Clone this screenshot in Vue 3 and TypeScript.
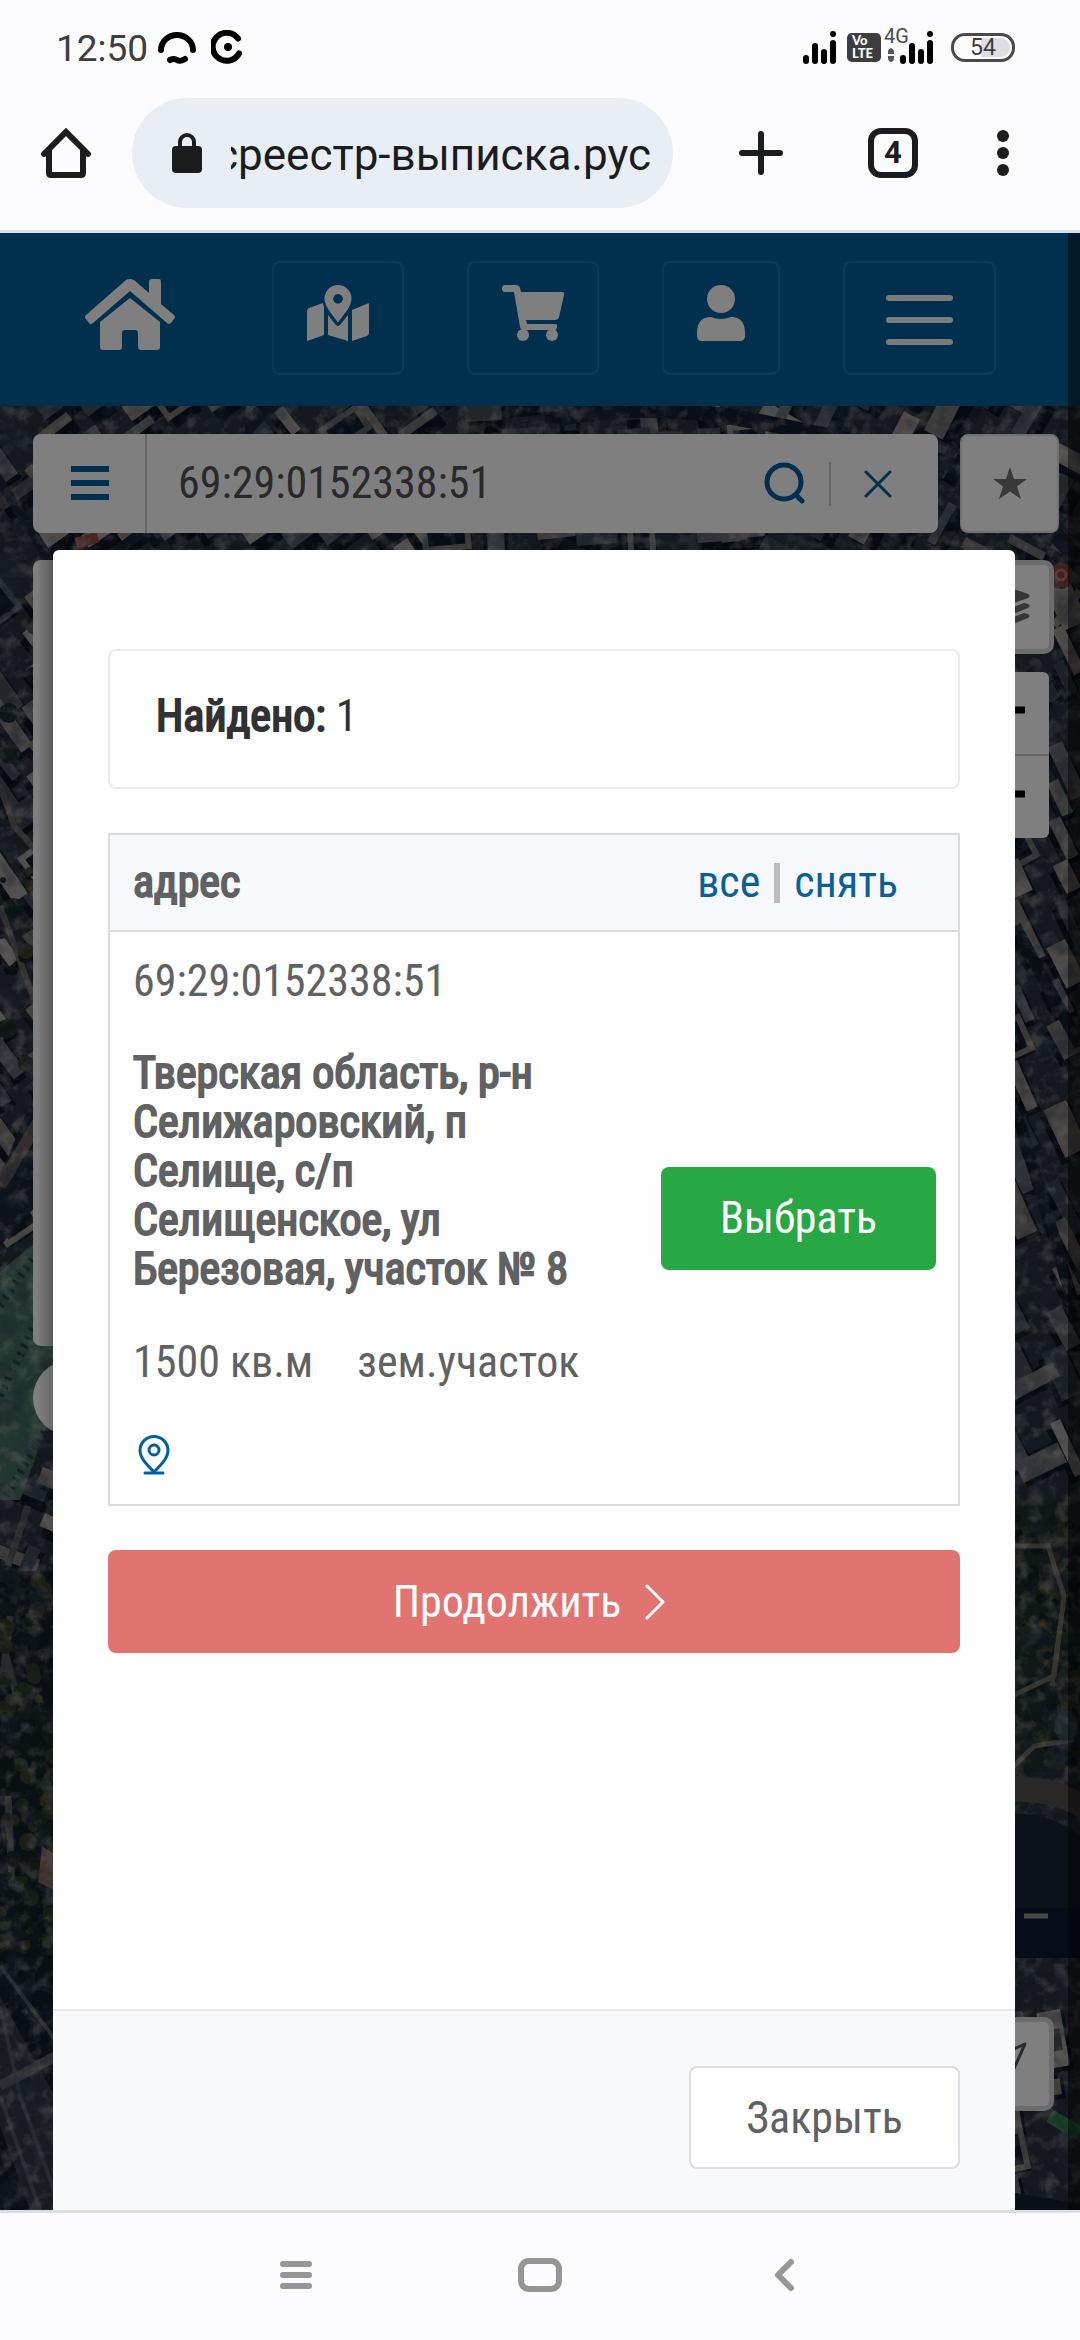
<script setup lang="ts">
import { ref } from 'vue'

interface Building {
  x: number
  y: number
  w: number
  h: number
  angle: number
  fill: string
  court: boolean
}

interface Tree {
  x: number
  y: number
  r: number
  fill: string
}

const query = ref('69:29:0152338:51')

const parcel = {
  number: '69:29:0152338:51',
  address: 'Тверская область, р-н Селижаровский, п Селище, с/п Селищенское, ул Березовая, участок № 8',
  area: '1500 кв.м',
  kind: 'зем.участок',
}

// Small seeded generator keeps the city pattern stable between renders.
let seed = 20
function random(): number {
  seed = (seed * 16807) % 2147483647
  return seed / 2147483647
}

const roofs = ['#88827d', '#6d6e72', '#99948f', '#5c626c', '#434b58', '#7a7674', '#4b4d55', '#a29e9a', '#38424f']
const buildings: Building[] = []
const trees: Tree[] = []

function block(x0: number, y0: number, x1: number, y1: number, step: number, angle: number): void {
  for (let y = y0; y < y1; y += step) {
    for (let x = x0; x < x1; x += step * 1.2) {
      if (random() < 0.1) continue
      const court = random() < 0.1
      buildings.push({
        x: Math.round(x + random() * 10),
        y: Math.round(y + random() * 10),
        w: Math.round(step * (0.7 + random() * 0.9)),
        h: Math.round(step * (court ? 0.7 : 0.25 + random() * 0.4)),
        angle: Math.round(angle + (random() < 0.25 ? 90 : 0) + random() * 4),
        fill: roofs[Math.floor(random() * roofs.length)],
        court,
      })
    }
  }
}

function grove(x0: number, y0: number, x1: number, y1: number, count: number): void {
  const greens = ['#1d2d26', '#131f22', '#2d3b2a', '#182627', '#3b3c29']
  for (let i = 0; i < count; i++) {
    trees.push({
      x: Math.round(x0 + random() * (x1 - x0)),
      y: Math.round(y0 + random() * (y1 - y0)),
      r: Math.round(3 + random() * 7),
      fill: greens[Math.floor(random() * greens.length)],
    })
  }
}

block(-10, -10, 420, 160, 34, -38)
block(420, -10, 760, 160, 32, -6)
block(760, -10, 1090, 160, 34, -64)
block(-10, 170, 60, 860, 38, 52)
block(1010, 170, 1090, 1080, 40, 62)
block(1010, 1600, 1090, 1810, 40, 78)
block(-10, 1060, 60, 1180, 38, 20)
grove(0, 1170, 56, 1560, 90)
grove(1012, 1110, 1084, 1360, 80)
grove(0, 200, 56, 700, 26)
</script>

<template>
  <div class="phone">
    <header class="status">
      <div class="status-side">
        <time>12:50</time>
        <svg class="glyph-arc" width="40" height="34" viewBox="0 0 40 34" fill="none" stroke="#000" stroke-linecap="round" aria-hidden="true">
          <path d="M4 20a16 15 0 0 1 32 0" stroke-width="6" />
          <path d="M13 30q4-2 7 0t8-1" stroke-width="6" />
        </svg>
        <svg width="32" height="34" viewBox="0 0 32 34" fill="none" aria-hidden="true">
          <path d="M27 8.500a14 14 0 1 0 1 15" stroke="#000" stroke-width="6" stroke-linecap="round" />
          <circle cx="17" cy="17" r="4" fill="#000" />
        </svg>
      </div>
      <div class="status-side">
        <svg width="34" height="34" viewBox="0 0 34 34" aria-hidden="true">
          <rect x="0" y="25" width="6" height="9" rx="3" />
          <rect x="9" y="13" width="6" height="21" rx="3" />
          <rect x="18" y="19" width="6" height="15" rx="3" />
          <rect x="27" y="10" width="6" height="24" rx="3" />
          <circle cx="30" cy="4" r="3" />
        </svg>
        <div class="volte"><span>Vo</span><span>LTE</span></div>
        <div class="cell">
          <span class="cell-type">4G</span>
          <svg width="6" height="14" viewBox="0 0 6 14" fill="#555" aria-hidden="true">
            <path d="M0 6V4q0-3 3-4 3 1 3 4v2zM0 8h6v2q0 3-3 4-3-1-3-4z" />
          </svg>
        </div>
        <svg width="34" height="34" viewBox="0 0 34 34" aria-hidden="true">
          <rect x="0" y="25" width="6" height="9" rx="3" />
          <rect x="9" y="13" width="6" height="21" rx="3" />
          <rect x="18" y="19" width="6" height="15" rx="3" />
          <rect x="27" y="10" width="6" height="24" rx="3" />
          <circle cx="30" cy="4" r="3" />
        </svg>
        <div class="battery">54</div>
      </div>
    </header>

    <div class="toolbar">
      <button class="tool" type="button" aria-label="Главная страница">
        <svg width="52" height="52" viewBox="0 0 52 52" fill="none" stroke="#1b1c1e" stroke-width="6" stroke-linecap="round" stroke-linejoin="round">
          <path d="M4 27 26 5l22 22" stroke-linejoin="miter" />
          <path d="M9 24v22q0 2 2 2h30q2 0 2-2V24" />
        </svg>
      </button>
      <div class="omnibox">
        <svg width="30" height="40" viewBox="0 0 30 40" aria-hidden="true">
          <rect y="13" width="30" height="27" rx="4" fill="#1b1c1e" />
          <path d="M8 14V9a7 7 0 0 1 14 0v5" fill="none" stroke="#1b1c1e" stroke-width="4" />
        </svg>
        <div class="url"><span>росреестр-выписка.рус</span></div>
      </div>
      <button class="tool plus" type="button" aria-label="Новая вкладка">
        <svg width="46" height="46" viewBox="0 0 46 46" stroke="#1b1c1e" stroke-width="6" stroke-linecap="round">
          <path d="M23 4v38M4 23h38" />
        </svg>
      </button>
      <button class="tabs" type="button" aria-label="Вкладки">4</button>
      <button class="tool dots" type="button" aria-label="Меню браузера">
        <svg width="12" height="46" viewBox="0 0 12 46" fill="#1b1c1e">
          <circle cx="6" cy="6" r="6" />
          <circle cx="6" cy="23" r="6" />
          <circle cx="6" cy="40" r="6" />
        </svg>
      </button>
    </div>

    <main class="page">
      <nav class="site-nav">
        <a class="brand" href="#" aria-label="Главная">
          <svg width="90" height="72" viewBox="0 0 90 72" fill="#fff">
            <path d="M41 1q4-2 8 0l15 13V3q0-3 3-3h7q2 0 2 3v22l13 11q2 2 0 4l-3 4q-2 2-4 0L45 12 8 44q-2 2-4 0l-3-4q-2-2 0-4z" />
            <path d="M45 19 75 43v25q0 3-3 3H56q-3 0-3-3V54q0-3-3-3H40q-3 0-3 3v14q0 3-3 3H18q-3 0-3-3V43z" />
          </svg>
        </a>
        <a class="nav-box" href="#" aria-label="Карта">
          <svg width="62" height="56" viewBox="0 0 62 56" fill="#fff">
            <path fill-rule="evenodd" d="M31 0a13.500 13.500 0 0 1 13.500 13.500c0 8-7 15-13.500 24-6.500-9-13.500-16-13.500-24A13.500 13.500 0 0 1 31 0zm0 9a4.800 4.800 0 1 0 .1 0z" />
            <path d="M0 26q0-2 2-3l14-5q0 1 1 4v28L0 56zM45 25l17-7v30q0 2-2 3L45 56zM21 30l8 10q2 2 4 0l8-10v26l-20-6z" />
          </svg>
        </a>
        <a class="nav-box" href="#" aria-label="Корзина">
          <svg width="62" height="56" viewBox="0 0 62 56" fill="#fff">
            <path d="M3 0h11q3 0 4 3l1 4h41q3 0 2 3l-5 22q-1 3-4 3H24l1 4h28q3 0 2 3l-1 3H22q-3 0-4-3L12 7H3Q0 7 0 3.500T3 0z" />
            <circle cx="21" cy="50" r="6" />
            <circle cx="50" cy="50" r="6" />
          </svg>
        </a>
        <a class="nav-box" href="#" aria-label="Кабинет">
          <svg width="48" height="56" viewBox="0 0 48 56" fill="#fff">
            <circle cx="24" cy="14" r="14" />
            <path d="M14 32q10 4 20 0 14 0 14 16v3q0 5-5 5H5q-5 0-5-5v-3q0-16 14-16z" />
          </svg>
        </a>
        <button class="nav-box menu" type="button" aria-label="Меню">
          <svg width="67" height="52" viewBox="0 0 67 52" stroke="#fff" stroke-opacity="0.95" stroke-width="6" stroke-linecap="round">
            <path d="M3 4h61M3 26h61M3 48h61" />
          </svg>
        </button>
      </nav>

      <section class="map">
        <svg class="aerial" viewBox="0 0 1080 1804" preserveAspectRatio="xMidYMin slice" aria-hidden="true">
          <defs>
            <filter id="grain" x="0" y="0" width="100%" height="100%">
              <feTurbulence type="fractalNoise" baseFrequency="0.07" numOctaves="4" seed="8" />
              <feColorMatrix values="0 0 0 0 0.68  0 0 0 0 0.65  0 0 0 0 0.62  3 0 0 0 -1.4" />
            </filter>
            <filter id="shade" x="0" y="0" width="100%" height="100%">
              <feTurbulence type="fractalNoise" baseFrequency="0.04" numOctaves="3" seed="3" />
              <feColorMatrix values="0 0 0 0 0.03  0 0 0 0 0.05  0 0 0 0 0.09  3.2 0 0 0 -1.5" />
            </filter>
          </defs>
          <rect width="1080" height="1804" fill="#282f3b" />
          <g>
            <path v-for="(b, i) in buildings" :key="'s' + i" :d="`M0 0h${b.w}v${b.h + 8}h${-b.w}z`" :transform="`translate(${b.x + 4} ${b.y + 4}) rotate(${b.angle})`" fill="#0c1220" />
            <path
              v-for="(b, i) in buildings"
              :key="'r' + i"
              :d="`M0 0h${b.w}v${b.h}h${-b.w}z`"
              :transform="`translate(${b.x} ${b.y}) rotate(${b.angle})`"
              :fill="b.court ? '#10192a' : b.fill"
              :stroke="b.court ? b.fill : 'none'"
              stroke-width="6"
            />
          </g>
          <g fill="none">
            <path d="M560 12Q650-6 760 16T960 60Q1040 100 1090 170" stroke="#141c2c" stroke-width="16" />
            <path d="M-10 60 60 170M110 150 190 90 270 0M880 160 980 0" stroke="#1b2434" stroke-width="10" />
            <path d="M0 380 14 420 50 460M0 500 40 610" stroke="#66615f" stroke-width="6" />
            <path d="M1015 520 1080 640M1015 700 1080 920" stroke="#131b29" stroke-width="12" />
          </g>
          <path d="M74 132 96 126 100 136 78 143z" fill="#8f4a42" />
          <path d="M0 840 54 780V640L0 770z" fill="#1a2433" />
          <path d="M0 780 54 690" stroke="#625c56" stroke-width="12" />
          <path d="M0 866 54 820V1000L20 1094H0z" fill="#436c60" />
          <path d="M0 900 44 836M0 990 54 880M6 1090 54 1010" stroke="#21443d" stroke-width="8" stroke-dasharray="3 6" />
          <circle cx="1061" cy="170" r="13" fill="#74443f" />
          <circle cx="1061" cy="169" r="5" fill="none" stroke="#b5705f" stroke-width="3" />
          <path d="M1054 220 1080 185" stroke="#8d8272" stroke-width="8" />

          <rect x="1010" y="1094" width="70" height="272" fill="#232d2d" />
          <rect x="0" y="1165" width="56" height="440" fill="#131e25" />
          <path d="M8 1160 28 1100M6 1250 22 1310M10 1210 2 1280M12 1480 8 1390" stroke="#515657" stroke-width="7" />
          <circle v-for="(t, i) in trees" :key="'t' + i" :cx="t.x" :cy="t.y" :r="t.r" :fill="t.fill" />
          <path d="M1012 1140h36l16 50-10 80-42 20M1052 1280l8-60M1010 1364l24-24 40-6" stroke="#6b6862" stroke-width="5" fill="none" />
          <path d="M42 1440 54 1448V1484L38 1476z" fill="#8a6a62" />
          <ellipse cx="1066" cy="1320" rx="12" ry="15" fill="#3d5258" />
          <path d="M0 1580h56v224H0z" fill="#111c29" />
          <path d="M0 1590 60 1700V1804H30L0 1720z" fill="#303742" />
          <path d="M0 1600 20 1690 56 1790M0 1690 40 1804M0 1560 60 1640" stroke="#4f5660" stroke-width="4" fill="none" />
          <path d="M0 1680 56 1650" stroke="#5c6168" stroke-width="10" />
          <path d="M1050 1710 1080 1728" stroke="#2f8050" stroke-width="14" />
          <rect width="1080" height="1804" filter="url(#grain)" opacity="0.36" />
          <rect width="1080" height="1804" filter="url(#shade)" opacity="0.45" />
          <path d="M1010 1372q40-4 70 14v26q-30-18-70-16z" fill="#544e4f" />
          <path d="M1010 1408q40-2 70 22v82h-70z" fill="#182334" />
          <path d="M1010 1502h70v50h-70z" fill="#0c1930" />
          <path d="M1024 1510h24" stroke="#92928e" stroke-width="5" />
          <path d="M1010 1786 1080 1798V1804H1010z" fill="#16202f" />
        </svg>

        <div class="map-top">
          <form class="search" @submit.prevent>
            <button class="search-menu" type="button" aria-label="Слои">
              <svg width="38" height="36" viewBox="0 0 38 36" stroke="#00609d" stroke-width="6">
                <path d="M0 3h38M0 17h38M0 31h38" />
              </svg>
            </button>
            <input v-model="query" type="text" aria-label="Кадастровый номер" />
            <button class="search-go" type="submit" aria-label="Найти">
              <svg width="42" height="44" viewBox="0 0 42 44" fill="none" stroke="#00609d" stroke-width="5" stroke-linecap="round">
                <circle cx="21" cy="20" r="17" />
                <path d="m33 33 6 6" />
              </svg>
            </button>
            <button class="search-clear" type="button" aria-label="Очистить">
              <svg width="28" height="28" viewBox="0 0 28 28" stroke="#00609d" stroke-width="3" stroke-linecap="round">
                <path d="m2 2 24 24M26 2 2 26" />
              </svg>
            </button>
          </form>
          <button class="star" type="button" aria-label="Избранное">
            <svg width="34" height="34" viewBox="0 0 34 34" fill="#727272">
              <path d="m17 0 4 12h13L24 19.500 28 32 17 24.500 6 32l4-12.500L0 12h13z" />
            </svg>
          </button>
        </div>

        <div class="panel"></div>
        <div class="bubble"></div>
        <button class="control layers" type="button" aria-label="Слои карты">
          <svg width="50" height="42" viewBox="0 0 50 42" fill="#6c6c6c">
            <path d="M22 1q3-1 6 0l20 7q3 2 0 4l-20 7q-3 1-6 0L2 12q-3-2 0-4z" />
            <path d="m44 17 4 1q3 2 0 4l-20 8q-3 1-6 0L2 22q-3-2 0-4l4-1 16 6q3 1 6 0zM44 27l4 1q3 2 0 4l-20 8q-3 1-6 0L2 32q-3-2 0-4l4-1 16 6q3 1 6 0z" />
          </svg>
        </button>
        <div class="zoom">
          <button type="button" aria-label="Приблизить">
            <svg width="34" height="34" viewBox="0 0 34 34" stroke="#000" stroke-width="7"><path d="M0 17h34M17 0v34" /></svg>
          </button>
          <button type="button" aria-label="Отдалить">
            <svg width="34" height="34" viewBox="0 0 34 34" stroke="#000" stroke-width="7"><path d="M0 17h34" /></svg>
          </button>
        </div>
        <button class="control locate" type="button" aria-label="Моё местоположение">
          <svg width="44" height="44" viewBox="0 0 44 44" fill="none" stroke="#555" stroke-width="3" stroke-linejoin="round">
            <path d="M42 2 24 42l-4-18L2 20z" />
          </svg>
        </button>
      </section>

      <div class="backdrop">
        <div class="dialog" role="dialog" aria-modal="true" aria-label="Результаты поиска">
          <div class="dialog-body">
            <p class="found"><b>Найдено:</b> 1</p>
            <table class="results">
              <thead>
                <tr>
                  <th scope="col">адрес</th>
                  <td class="picks"><a href="#">все</a><i></i><a href="#">снять</a></td>
                </tr>
              </thead>
              <tbody>
                <tr>
                  <td class="info">
                    <p>{{ parcel.number }}</p>
                    <p class="address">{{ parcel.address }}</p>
                    <p class="facts"><span>{{ parcel.area }}</span><span>{{ parcel.kind }}</span></p>
                    <a class="pin" href="#" aria-label="Показать на карте">
                      <svg width="40" height="40" viewBox="0 0 40 40" fill="none" stroke="#00609d" stroke-width="3" stroke-linecap="round">
                        <path d="M21 37C14 30 7 23 7 15.500a14 14 0 0 1 28 0C35 23 28 30 21 37z" />
                        <circle cx="21" cy="15" r="5" />
                        <path d="M12 38h18" />
                      </svg>
                    </a>
                  </td>
                  <td class="action"><button class="btn choose" type="button">Выбрать</button></td>
                </tr>
              </tbody>
            </table>
            <button class="btn next" type="button">
              Продолжить
              <svg width="20" height="36" viewBox="0 0 20 36" fill="none" stroke="#fff" stroke-width="3" stroke-linecap="round" stroke-linejoin="round">
                <path d="m2 2 16 16L2 34" />
              </svg>
            </button>
          </div>
          <div class="dialog-foot">
            <button class="btn close" type="button">Закрыть</button>
          </div>
        </div>
      </div>
      <div class="gutter"></div>
    </main>

    <footer class="system">
      <button type="button" aria-label="Недавние">
        <svg width="32" height="32" viewBox="0 0 32 32" stroke="#969698" stroke-width="6" stroke-linecap="round">
          <path d="M3 5h26M3 16h26M3 27h26" />
        </svg>
      </button>
      <button type="button" aria-label="Домой">
        <svg width="44" height="34" viewBox="0 0 44 34" fill="none" stroke="#969698" stroke-width="6">
          <rect x="3" y="3" width="38" height="28" rx="8" />
        </svg>
      </button>
      <button type="button" aria-label="Назад">
        <svg width="32" height="34" viewBox="0 0 32 34" fill="none" stroke="#969698" stroke-width="6" stroke-linecap="round" stroke-linejoin="round">
          <path d="M23 4 10 17l13 13" />
        </svg>
      </button>
    </footer>
  </div>
</template>

<style>
body {
  margin: 0;
}
</style>

<style scoped>
.phone {
  display: flex;
  flex-direction: column;
  min-height: 100vh;
  background: #fcfcff;
  font-family: "Roboto Condensed", "Liberation Sans Narrow", Roboto, sans-serif;
  font-size: 44px;
  line-height: 48px;
  color: #606163;
  overflow: hidden;
}

button {
  font: inherit;
  color: inherit;
  border: 0;
  padding: 0;
  background: none;
}

a {
  color: #0a6096;
  text-decoration: none;
}

svg {
  display: block;
  flex: none;
}

p {
  margin: 0;
}

.status {
  display: flex;
  justify-content: space-between;
  align-items: center;
  height: 94px;
  padding: 0 65px 0 56px;
  font-family: Roboto, sans-serif;
}

.status-side {
  display: flex;
  align-items: center;
}

.status time {
  padding-top: 4px;
  font-size: 37px;
  color: #3d3d3f;
}

.glyph-arc {
  margin: 0 14px 0 9px;
}

.volte {
  display: flex;
  flex-direction: column;
  box-sizing: border-box;
  width: 34px;
  height: 29px;
  margin: 0 3px 0 10px;
  padding: 1px 0 0 5px;
  border-radius: 5px;
  background: #3d3d3f;
  color: #fff;
  font-family: Lato, sans-serif;
  font-size: 13px;
  font-weight: 900;
  line-height: 13px;
}

.cell {
  display: flex;
  flex-direction: column;
  gap: 4px;
  width: 16px;
  margin-bottom: 4px;
}

.cell svg {
  margin-left: 4px;
}

.cell-type {
  font-size: 20px;
  line-height: 16px;
  color: #4a4a4c;
}

.battery {
  box-sizing: border-box;
  width: 64px;
  height: 29px;
  margin-left: 17px;
  border: 3px solid #4a4a4c;
  border-radius: 14px;
  box-shadow: inset 0 0 0 2px #fcfcff;
  background: linear-gradient(90deg, #fcfcff 46%, #dfdfe1 46%);
  font-size: 23px;
  line-height: 24px;
  text-align: center;
  color: #3d3d3f;
}

.toolbar {
  display: flex;
  align-items: center;
  height: 110px;
  padding: 4px 71px 22px 40px;
  border-bottom: 3px solid #d6e0ea;
  font-family: Roboto, sans-serif;
}

.omnibox {
  display: flex;
  flex: 1;
  align-items: center;
  gap: 29px;
  min-width: 0;
  height: 110px;
  margin-left: 40px;
  padding: 0 22px 0 40px;
  box-sizing: border-box;
  border-radius: 55px;
  background: #e9eef5;
}

.url {
  display: flex;
  flex: 1;
  justify-content: flex-end;
  min-width: 0;
  padding-top: 4px;
  overflow: hidden;
  font-size: 44px;
  line-height: 60px;
  white-space: nowrap;
  color: #1b1c1e;
}

.plus {
  margin-left: 65px;
}

.tabs {
  box-sizing: border-box;
  width: 50px;
  height: 50px;
  margin-left: 84px;
  border: 6px solid #1b1c1e;
  border-radius: 13px;
  font-size: 31px;
  font-weight: 700;
  line-height: 38px;
  text-align: center;
  color: #1b1c1e;
}

.dots {
  margin-left: 79px;
}

.page {
  position: relative;
  display: flex;
  flex: 1;
  flex-direction: column;
}

.site-nav {
  display: flex;
  justify-content: space-between;
  align-items: flex-start;
  height: 114px;
  padding: 28px 84px 31px 85px;
  background: #00609d;
}

.brand {
  width: 124px;
  padding-top: 18px;
}

.nav-box {
  display: flex;
  box-sizing: border-box;
  height: 114px;
  padding: 22px 33px;
  border: 2px solid #1a70a8;
  border-radius: 8px;
}

.menu {
  padding: 31px 41px;
}

.map {
  position: relative;
  flex: 1;
  overflow: hidden;
}

.aerial {
  position: absolute;
  inset: 0;
  width: 100%;
  height: 100%;
}

.map-top {
  position: relative;
  display: flex;
  gap: 22px;
  padding: 28px 21px 0 33px;
}

.search {
  display: flex;
  flex: 1;
  align-items: center;
  height: 99px;
  min-width: 0;
  border-radius: 8px;
  background: #fff;
}

.search-menu {
  display: flex;
  align-items: center;
  height: 99px;
  padding: 0 36px 0 38px;
  border-right: 2px solid #ccc;
}

.search input {
  flex: 1;
  min-width: 0;
  padding: 0 0 2px 31px;
  border: 0;
  outline: 0;
  background: none;
  font: inherit;
  color: #505256;
}

.search-go {
  padding-right: 24px;
  border-right: 2px solid #ccc;
}

.search-clear {
  padding: 0 46px 0 33px;
}

.star {
  display: flex;
  align-items: center;
  justify-content: center;
  box-sizing: border-box;
  width: 99px;
  height: 99px;
  border: 2px solid #e2e2e8;
  border-radius: 8px;
  background: #fff;
}

.panel {
  position: absolute;
  top: 154px;
  left: 33px;
  width: 600px;
  height: 786px;
  border-radius: 8px;
  background: linear-gradient(90deg, #fff 4px, #aaa 22px);
}

.bubble {
  position: absolute;
  top: 954px;
  left: 33px;
  width: 76px;
  height: 76px;
  border-radius: 50%;
  background: linear-gradient(90deg, #fff 4px, #ccc 22px);
}

.control {
  position: absolute;
  right: 26px;
  display: flex;
  align-items: center;
  justify-content: center;
  box-sizing: border-box;
  width: 98px;
  height: 94px;
  border: 5px solid #d9d9d9;
  border-radius: 10px;
  background: #fff;
}

.layers {
  top: 154px;
}

.locate {
  bottom: 99px;
}

.zoom {
  position: absolute;
  top: 266px;
  right: 31px;
  width: 82px;
  border-radius: 6px;
  background: #fff;
}

.zoom button {
  display: flex;
  align-items: center;
  justify-content: center;
  box-sizing: border-box;
  width: 82px;
  height: 82px;
  padding-bottom: 6px;
}

.zoom button + button {
  height: 84px;
  border-top: 2px solid #ccc;
}

.backdrop {
  position: absolute;
  inset: 0;
  display: flex;
  padding: 317px 65px 0 53px;
  background: rgba(0, 0, 0, 0.5);
}

.gutter {
  position: absolute;
  top: 0;
  right: 0;
  bottom: 0;
  width: 12px;
  background: rgba(0, 0, 0, 0.45);
}

.dialog {
  display: flex;
  flex: 1;
  flex-direction: column;
  min-width: 0;
  border-radius: 6px 6px 0 0;
  background: #fefefe;
  overflow: hidden;
}

.dialog-body {
  display: flex;
  flex: 1;
  flex-direction: column;
  gap: 44px;
  padding: 99px 55px 0;
}

.found {
  padding: 41px 46px 47px;
  border: 2px solid #ebebee;
  border-radius: 8px;
  color: #303133;
}

.found b,
.results th,
.address {
  font-weight: 400;
  -webkit-text-stroke: 2px currentColor;
}

.results {
  width: 100%;
  border: 2px solid #dbdcde;
  border-spacing: 0;
}

.results th,
.results td {
  padding: 25px 22px 25px 23px;
  text-align: left;
}

.results thead th,
.results thead td {
  padding: 23px 22px 24px 23px;
  border-bottom: 2px solid #dbdcde;
  background: #f7f8fb;
}

.results thead .picks {
  padding-right: 60px;
  text-align: right;
  white-space: nowrap;
}

.picks i {
  display: inline-block;
  width: 6px;
  height: 40px;
  margin: 0 14px;
  vertical-align: -6px;
  background: #bcbdbf;
}

.results .info {
  display: flex;
  flex-direction: column;
  gap: 44px;
}

.address {
  line-height: 49px;
}

.facts {
  display: flex;
  gap: 44px;
}

.pin {
  display: flex;
  align-items: center;
  height: 49px;
}

.btn {
  display: flex;
  align-items: center;
  justify-content: center;
  box-sizing: border-box;
  height: 103px;
  border-radius: 8px;
  color: #fff;
}

.choose {
  width: 275px;
  background: #28a745;
}

.next {
  gap: 24px;
  padding-right: 10px;
  background: #e17370;
}

.dialog-foot {
  display: flex;
  justify-content: flex-end;
  padding: 55px 55px 41px;
  border-top: 2px solid #e7e8ec;
  background: #f8f9fb;
}

.close {
  width: 271px;
  border: 2px solid #dcdde2;
  background: #fff;
  color: #606163;
}

.system {
  display: flex;
  align-items: center;
  justify-content: center;
  gap: 206px;
  height: 123px;
  padding-bottom: 4px;
  border-top: 3px solid #dcdde3;
}
</style>
